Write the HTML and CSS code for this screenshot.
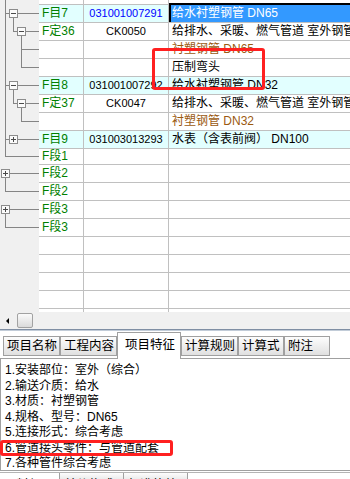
FILE: index.html
```html
<!DOCTYPE html>
<html lang="zh-CN">
<head>
  <meta charset="UTF-8">
  <title>分部分项</title>
  <link rel="stylesheet" href="styles.css">
</head>
<body>
  <div class="grid">
    <div class="rows">
      <div class="row">
        <div class="tree"><svg width="39" height="18" viewBox="0 0 39 18"><path d="M5.5 0V18M21.5 0V8.5H39"/></svg></div>
        <div class="cell code"></div>
        <div class="cell num"></div>
        <div class="cell name sub">衬塑钢管 DN20</div>
      </div>
      <div class="row item">
        <div class="tree"><svg width="39" height="18" viewBox="0 0 39 18"><path d="M5.5 0V18M5.5 8.5H9M18 8.5H39M13.5 13V18"/><rect x="9.5" y="4.5" width="8" height="8"/><path class="sign" d="M11 8.5H16"/></svg></div>
        <div class="cell code">F目7</div>
        <div class="cell num current">031001007291</div>
        <div class="cell name selected">给水衬塑钢管 DN65</div>
      </div>
      <div class="row">
        <div class="tree"><svg width="39" height="18" viewBox="0 0 39 18"><path d="M5.5 0V18M13.5 0V8.5H17M26 8.5H39M21.5 13V18"/><rect x="17.5" y="4.5" width="8" height="8"/><path class="sign" d="M19 8.5H24"/></svg></div>
        <div class="cell code">F定36</div>
        <div class="cell num">CK0050</div>
        <div class="cell name">给排水、采暖、燃气管道 室外钢管</div>
      </div>
      <div class="row">
        <div class="tree"><svg width="39" height="18" viewBox="0 0 39 18"><path d="M5.5 0V18M21.5 0V18M22 8.5H39"/></svg></div>
        <div class="cell code"></div>
        <div class="cell num"></div>
        <div class="cell name sub">衬塑钢管 DN65</div>
      </div>
      <div class="row">
        <div class="tree"><svg width="39" height="18" viewBox="0 0 39 18"><path d="M5.5 0V18M21.5 0V8.5H39"/></svg></div>
        <div class="cell code"></div>
        <div class="cell num"></div>
        <div class="cell name">压制弯头</div>
      </div>
      <div class="row item">
        <div class="tree"><svg width="39" height="18" viewBox="0 0 39 18"><path d="M5.5 0V18M5.5 8.5H9M18 8.5H39M13.5 13V18"/><rect x="9.5" y="4.5" width="8" height="8"/><path class="sign" d="M11 8.5H16"/></svg></div>
        <div class="cell code">F目8</div>
        <div class="cell num">031001007292</div>
        <div class="cell name">给水衬塑钢管 DN32</div>
      </div>
      <div class="row">
        <div class="tree"><svg width="39" height="18" viewBox="0 0 39 18"><path d="M5.5 0V18M13.5 0V8.5H17M26 8.5H39M21.5 13V18"/><rect x="17.5" y="4.5" width="8" height="8"/><path class="sign" d="M19 8.5H24"/></svg></div>
        <div class="cell code">F定37</div>
        <div class="cell num">CK0047</div>
        <div class="cell name">给排水、采暖、燃气管道 室外钢管</div>
      </div>
      <div class="row">
        <div class="tree"><svg width="39" height="18" viewBox="0 0 39 18"><path d="M5.5 0V18M21.5 0V8.5H39"/></svg></div>
        <div class="cell code"></div>
        <div class="cell num"></div>
        <div class="cell name sub">衬塑钢管 DN32</div>
      </div>
      <div class="row item">
        <div class="tree"><svg width="39" height="18" viewBox="0 0 39 18"><path d="M5.5 0V18M5.5 8.5H9M18 8.5H39"/><rect x="9.5" y="4.5" width="8" height="8"/><path class="sign" d="M11 8.5H16M13.5 6V11"/></svg></div>
        <div class="cell code">F目9</div>
        <div class="cell num">031003013293</div>
        <div class="cell name">水表（含表前阀） DN100</div>
      </div>
      <div class="row short">
        <div class="tree"><svg width="39" height="16" viewBox="0 0 39 16"><path d="M5.5 0V7.5H39"/></svg></div>
        <div class="cell code">F段1</div>
        <div class="cell num"></div>
        <div class="cell name"></div>
      </div>
      <div class="row">
        <div class="tree"><svg width="39" height="18" viewBox="0 0 39 18"><path d="M10 8.5H39M5.5 13V18"/><rect x="1.5" y="4.5" width="8" height="8"/><path class="sign" d="M3 8.5H8M5.5 6V11"/></svg></div>
        <div class="cell code">F段2</div>
        <div class="cell num"></div>
        <div class="cell name"></div>
      </div>
      <div class="row">
        <div class="tree"><svg width="39" height="18" viewBox="0 0 39 18"><path d="M5.5 0V8.5H39"/></svg></div>
        <div class="cell code">F段2</div>
        <div class="cell num"></div>
        <div class="cell name"></div>
      </div>
      <div class="row">
        <div class="tree"><svg width="39" height="18" viewBox="0 0 39 18"><path d="M10 8.5H39M5.5 13V18"/><rect x="1.5" y="4.5" width="8" height="8"/><path class="sign" d="M3 8.5H8M5.5 6V11"/></svg></div>
        <div class="cell code">F段3</div>
        <div class="cell num"></div>
        <div class="cell name"></div>
      </div>
      <div class="row">
        <div class="tree"><svg width="39" height="18" viewBox="0 0 39 18"><path d="M5.5 0V8.5H39"/></svg></div>
        <div class="cell code">F段3</div>
        <div class="cell num"></div>
        <div class="cell name"></div>
      </div>
      <div class="row"><div class="tree"></div><div class="cell code"></div><div class="cell num"></div><div class="cell name"></div></div>
      <div class="row"><div class="tree"></div><div class="cell code"></div><div class="cell num"></div><div class="cell name"></div></div>
      <div class="row"><div class="tree"></div><div class="cell code"></div><div class="cell num"></div><div class="cell name"></div></div>
      <div class="row"><div class="tree"></div><div class="cell code"></div><div class="cell num"></div><div class="cell name"></div></div>
      <div class="row"><div class="tree"></div><div class="cell code"></div><div class="cell num"></div><div class="cell name"></div></div>
    </div>
  </div>

  <div class="hscroll"><span class="arrow-left"></span><span class="thumb"></span></div>
  <div class="splitter"></div>

  <div class="tabs">
    <span class="tab">项目名称</span>
    <span class="tab">工程内容</span>
    <span class="tab active">项目特征</span>
    <span class="tab">计算规则</span>
    <span class="tab">计算式</span>
    <span class="tab">附注</span>
  </div>
  <div class="panel">
    <div>1.安装部位：室外（综合）</div>
    <div>2.输送介质：给水</div>
    <div>3.材质：衬塑钢管</div>
    <div>4.规格、型号：DN65</div>
    <div>5.连接形式：综合考虑</div>
    <div>6.管道接头零件：与管道配套</div>
    <div>7.各种管件综合考虑</div>
  </div>
  <div class="subtabs">
    <span class="subtab on">工料机显示</span>
    <span class="subtab">单价构成</span>
    <span class="subtab">标准换算</span>
  </div>

  <div class="mark mark-grid"></div>
  <div class="mark mark-list"></div>
</body>
</html>
```

FILE: styles.css
```css
* { box-sizing: border-box; }
body { margin: 0; width: 350px; height: 479px; overflow: hidden; position: relative; background: #fff; color: #000; font-family: "Liberation Sans", "Noto Sans CJK SC", sans-serif; font-size: 12px; }

/* upper grid */
.grid { height: 312px; overflow: hidden; background: #f0f0f0; }
.rows { margin-top: -13px; }
.row { display: grid; grid-template-columns: 39px 45px 85px 1fr; height: 18px; }
.row.short { height: 16px; }
.tree { background: #f0f0f0; }
.tree svg { display: block; }
.tree path { fill: none; stroke: #858585; shape-rendering: crispEdges; }
.tree rect { fill: #fbfbfb; stroke: #8c8c8c; shape-rendering: crispEdges; }
.tree .sign { stroke: #4a4a4a; }
.cell { background: #fff; border-bottom: 1px solid #c0c0c0; line-height: 17px; white-space: nowrap; overflow: hidden; }
.short .cell { line-height: 15px; }
.code, .num { border-right: 1px solid #c0c0c0; }
.code { color: #008000; padding-left: 3px; }
.num { text-align: center; font-size: 11px; }
.num.current { color: #0000ff; }
.name { padding-left: 3px; }
.sub { color: #9b5a10; }
.item .cell { background: #e2ffff; }
.item .cell.selected { background: #3399ff; color: #fff; box-shadow: inset 2px 0 0 #000, 0 -2px 0 #000; }

/* scrollbar + splitter */
.hscroll { height: 17px; background: #f0f0f0; display: flex; align-items: center; padding-left: 6px; gap: 8px; }
.arrow-left { width: 0; height: 0; border-right: 3px solid #000; border-top: 3px solid transparent; border-bottom: 3px solid transparent; }
.thumb { width: 16px; height: 15px; border: 1px solid #a2a2a2; border-radius: 2px; background: linear-gradient(#fbfbfb, #dadada); }
.splitter { height: 2px; border-top: 1px solid #7f8ea3; background: #c2ccd8; }

/* tabs */
.tabs { height: 27px; display: flex; align-items: flex-end; padding-left: 3px; }
.tab { height: 20px; margin-bottom: 2px; min-width: 46px; padding: 0 2px 0 3px; border: 1px solid #a0a0a0; background: linear-gradient(#fdfdfd, #e0e0e0); font-size: 12.5px; line-height: 18px; white-space: nowrap; }
.tab.active { position: relative; z-index: 1; height: 27px; margin-bottom: -1px; padding: 3px 5px 0 7px; border-bottom: 0; background: #fff; }
.panel { height: 113px; border-top: 1px solid #a0a0a0; border-bottom: 1px solid #a0a0a0; border-left: 1px solid #a0a0a0; padding: 4px 0 0 4px; line-height: 15.5px; overflow: hidden; white-space: nowrap; }
.subtabs { height: 9px; margin-top: 1px; border-top: 1px solid #b4b4b4; display: flex; overflow: hidden; }
.subtab { width: 64px; border-right: 1px solid #a0a0a0; padding: 4px 0 0 4px; font-size: 12.5px; line-height: 16px; background: linear-gradient(#fdfdfd, #e6e6e6); white-space: nowrap; }
.subtab.on { width: 60px; background: #fff; }

/* red annotations */
.mark { position: absolute; border: 3px solid #ff2020; border-radius: 3px; }
.mark-grid { left: 152px; top: 48px; width: 113px; height: 42px; }
.mark-list { left: 0; top: 440px; width: 173px; height: 16px; }
```
